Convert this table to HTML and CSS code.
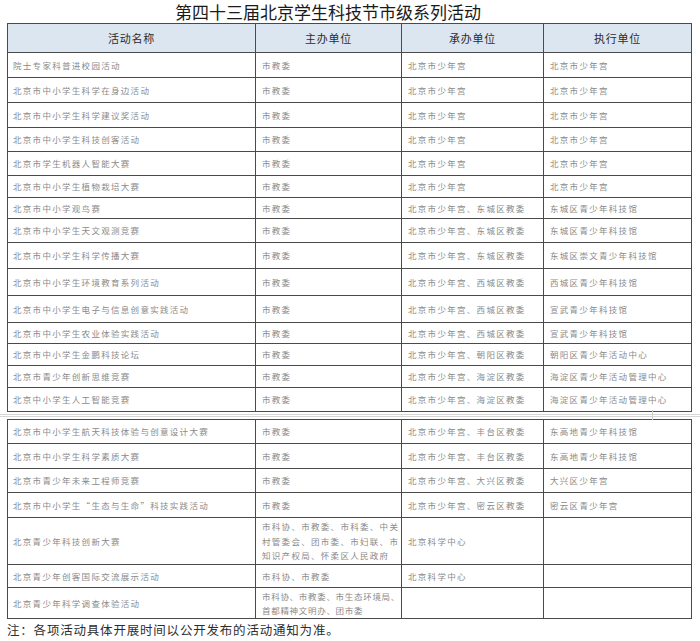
FILE: index.html
```html
<!DOCTYPE html>
<html lang="zh-CN">
<head>
<meta charset="utf-8">
<title>第四十三届北京学生科技节市级系列活动</title>
<link rel="stylesheet" href="styles.css">
</head>
<body>
<div class="page">
  <h1 class="title">第四十三届北京学生科技节市级系列活动</h1>
  <table class="grid">
    <colgroup><col class="c1"><col class="c2"><col class="c3"><col class="c4"></colgroup>
    <thead>
      <tr class="head"><th>活动名称</th><th>主办单位</th><th>承办单位</th><th>执行单位</th></tr>
    </thead>
    <tbody>
      <tr class="r25"><td>院士专家科普进校园活动</td><td>市教委</td><td>北京市少年宫</td><td>北京市少年宫</td></tr>
      <tr class="r25"><td>北京市中小学生科学在身边活动</td><td>市教委</td><td>北京市少年宫</td><td>北京市少年宫</td></tr>
      <tr class="r25"><td>北京市中小学生科学建议奖活动</td><td>市教委</td><td>北京市少年宫</td><td>北京市少年宫</td></tr>
      <tr class="r24"><td>北京市中小学生科技创客活动</td><td>市教委</td><td>北京市少年宫</td><td>北京市少年宫</td></tr>
      <tr class="r24"><td>北京市学生机器人智能大赛</td><td>市教委</td><td>北京市少年宫</td><td>北京市少年宫</td></tr>
      <tr class="r22"><td>北京市中小学生植物栽培大赛</td><td>市教委</td><td>北京市少年宫</td><td>北京市少年宫</td></tr>
      <tr class="r21"><td>北京市中小学观鸟赛</td><td>市教委</td><td>北京市少年宫、东城区教委</td><td>东城区青少年科技馆</td></tr>
      <tr class="r24"><td>北京市中小学生天文观测竞赛</td><td>市教委</td><td>北京市少年宫、东城区教委</td><td>东城区青少年科技馆</td></tr>
      <tr class="r26"><td>北京市中小学生科学传播大赛</td><td>市教委</td><td>北京市少年宫、东城区教委</td><td>东城区崇文青少年科技馆</td></tr>
      <tr class="r27"><td>北京市中小学生环境教育系列活动</td><td>市教委</td><td>北京市少年宫、西城区教委</td><td>西城区青少年科技馆</td></tr>
      <tr class="r27"><td>北京市中小学生电子与信息创意实践活动</td><td>市教委</td><td>北京市少年宫、西城区教委</td><td>宣武青少年科技馆</td></tr>
      <tr class="r21"><td>北京市中小学生农业体验实践活动</td><td>市教委</td><td>北京市少年宫、西城区教委</td><td>宣武青少年科技馆</td></tr>
      <tr class="r22"><td>北京市中小学生金鹏科技论坛</td><td>市教委</td><td>北京市少年宫、朝阳区教委</td><td>朝阳区青少年活动中心</td></tr>
      <tr class="r22"><td>北京市青少年创新思维竞赛</td><td>市教委</td><td>北京市少年宫、海淀区教委</td><td>海淀区青少年活动管理中心</td></tr>
      <tr class="r24"><td>北京中小学生人工智能竞赛</td><td>市教委</td><td>北京市少年宫、海淀区教委</td><td>海淀区青少年活动管理中心</td></tr>
    </tbody>
  </table>
  <div class="break"><span class="break-tick"></span></div>
  <table class="grid">
    <colgroup><col class="c1"><col class="c2"><col class="c3"><col class="c4"></colgroup>
    <tbody>
      <tr class="r24"><td>北京市中小学生航天科技体验与创意设计大赛</td><td>市教委</td><td>北京市少年宫、丰台区教委</td><td>东高地青少年科技馆</td></tr>
      <tr class="r25"><td>北京市中小学生科学素质大赛</td><td>市教委</td><td>北京市少年宫、丰台区教委</td><td>东高地青少年科技馆</td></tr>
      <tr class="r24"><td>北京市青少年未来工程师竞赛</td><td>市教委</td><td>北京市少年宫、大兴区教委</td><td>大兴区少年宫</td></tr>
      <tr class="r25"><td>北京市中小学生“生态与生命”科技实践活动</td><td>市教委</td><td>北京市少年宫、密云区教委</td><td>密云区青少年宫</td></tr>
      <tr class="r47"><td>北京青少年科技创新大赛</td><td class="multi">市科协、市教委、市科委、中关<br>村管委会、团市委、市妇联、市<br>知识产权局、怀柔区人民政府</td><td>北京科学中心</td><td></td></tr>
      <tr class="r23"><td>北京青少年创客国际交流展示活动</td><td>市科协、市教委</td><td>北京科学中心</td><td></td></tr>
      <tr class="r31"><td>北京青少年科学调查体验活动</td><td class="multi tight">市科协、市教委、市生态环境局、<br>首都精神文明办、团市委</td><td></td><td></td></tr>
    </tbody>
  </table>
  <p class="note">注：各项活动具体开展时间以公开发布的活动通知为准。</p>
</div>
</body>
</html>
```

FILE: styles.css
```css
html, body {
  margin: 0;
  padding: 0;
  background: #ffffff;
}

.page {
  width: 700px;
  height: 641px;
  overflow: hidden;
  padding: 0 9px 0 7px;
  box-sizing: border-box;
  font-family: "Noto Sans CJK SC", "Noto Sans", sans-serif;
}

.title {
  margin: 0;
  height: 23px;
  line-height: 23px;
  font-size: 17px;
  font-weight: normal;
  color: #1a1a1a;
  text-align: center;
  padding-right: 42px;
  letter-spacing: 0;
}

.grid {
  width: 684px;
  border-collapse: collapse;
  table-layout: fixed;
  border: 1px solid #333333;
}

.c1 { width: 248px; }
.c2 { width: 146px; }
.c3 { width: 142px; }
.c4 { width: 148px; }

.grid th,
.grid td {
  border: 1px solid #4a4a4a;
  padding: 0 0 0 5px;
  box-sizing: border-box;
  vertical-align: middle;
  white-space: nowrap;
  overflow: hidden;
}

.grid th {
  height: 29px;
  background: #dce6f1;
  color: #2b2b2b;
  font-size: 11px;
  font-weight: normal;
  letter-spacing: 0.8px;
  text-align: center;
  padding: 0;
}

.grid td {
  font-size: 8.5px;
  letter-spacing: 1.3px;
  color: #8a8a8a;
  text-align: left;
  line-height: 14.5px;
}

.grid td + td {
  padding-left: 6px;
}

.grid td.multi {
  line-height: 14.5px;
}

.grid td.tight {
  letter-spacing: 0.7px;
}

.r21 td { height: 21px; }
.r22 td { height: 22px; }
.r23 td { height: 23px; }
.r24 td { height: 24px; }
.r25 td { height: 25px; }
.r26 td { height: 26px; }
.r27 td { height: 27px; }
.r31 td { height: 31px; }
.r47 td { height: 47px; }

.break {
  height: 7px;
  margin: 0 -9px 0 -7px;
  display: flex;
  flex-direction: column;
  justify-content: center;
  position: relative;
}

.break::before {
  content: "";
  display: block;
  height: 1px;
  border-top: 1px solid #d6d6d6;
  border-bottom: 1px solid #d6d6d6;
}

.break-tick {
  position: absolute;
  left: 652px;
  top: -2px;
  width: 1px;
  height: 10px;
  background: #cfcfcf;
}

.note {
  margin: 0;
  height: 23px;
  line-height: 22px;
  font-size: 12.5px;
  letter-spacing: 0.8px;
  color: #2e2e2e;
}
```
